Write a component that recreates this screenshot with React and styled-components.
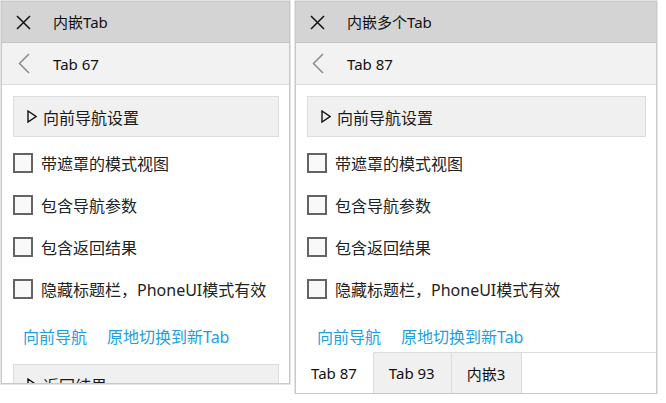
import React from 'react';
import styled, { createGlobalStyle } from 'styled-components';

const GlobalStyle = createGlobalStyle`
  html, body {
    margin: 0;
    padding: 0;
    background: #ffffff;
  }
  body {
    font-family: "Noto Sans", "Noto Sans CJK SC", sans-serif;
    color: #1a1a1a;
  }
`;

const Page = styled.div`
  display: flex;
  align-items: flex-start;
  gap: 5px;
  padding: 1px 0 0 1px;
`;

const Window = styled.div`
  box-sizing: border-box;
  width: ${({ width }) => width}px;
  height: ${({ height }) => height}px;
  border: 1px solid #c9c9c9;
  box-shadow: 0 0 0 1px #e4e4e4;
  display: flex;
  flex-direction: column;
  overflow: hidden;
  background: #fff;
`;

const TitleBar = styled.div`
  flex: none;
  height: 40px;
  display: flex;
  align-items: center;
  background: #d4d4d4;
  border-bottom: 1px solid #c4c4c4;
`;

const SubBar = styled.div`
  flex: none;
  height: 41px;
  display: flex;
  align-items: center;
  background: #f2f2f2;
  border-bottom: 1px solid #dedede;
`;

const IconSlot = styled.div`
  width: 51px;
  display: flex;
  align-items: center;
  padding-left: ${({ pad }) => pad}px;
  box-sizing: border-box;
`;

const Title = styled.span`
  font-size: 15px;
  line-height: 20px;
  color: #111;
`;

const Content = styled.div`
  flex: 1;
  overflow: hidden;
  padding: 11px 10px 0 11px;
`;

const Expander = styled.div`
  box-sizing: border-box;
  height: 41px;
  display: flex;
  align-items: center;
  gap: 6px;
  padding-left: 13px;
  background: #f0f0f0;
  border: 1px solid #dcdcdc;
  font-size: 16px;
  color: #1a1a1a;
`;

const CheckList = styled.div`
  margin-top: 5px;
  display: flex;
  flex-direction: column;
`;

const CheckRow = styled.label`
  height: 42px;
  display: flex;
  align-items: center;
  gap: 8px;
  font-size: 16px;
  color: #222;
`;

const Box = styled.span`
  box-sizing: border-box;
  width: 20px;
  height: 20px;
  border: 2px solid #646464;
  background: #f9f9f9;
  flex: none;
`;

const LinkRow = styled.div`
  height: 54px;
  display: flex;
  align-items: center;
  gap: 20px;
  padding: 0 0 2px 10px;
  box-sizing: border-box;
`;

const Link = styled.span`
  font-size: 16px;
  color: #1ba1e2;
  cursor: pointer;
`;

const TabBar = styled.div`
  flex: none;
  height: 41px;
  display: flex;
`;

const Tab = styled.div`
  box-sizing: border-box;
  display: flex;
  align-items: center;
  padding: 0 16px 0 15px;
  font-size: 15px;
  color: #111;
  background: ${({ active }) => (active ? '#ffffff' : '#f0f0f0')};
  border-top: 1px solid ${({ active }) => (active ? 'transparent' : '#dcdcdc')};
  border-right: 1px solid #dcdcdc;
`;

const TabFill = styled.div`
  flex: 1;
  border-top: 1px solid #dcdcdc;
`;

const CloseIcon = () => (
  <svg width="15" height="15" viewBox="0 0 15 15">
    <path d="M1 1 L14 14 M14 1 L1 14" stroke="#111" strokeWidth="1.5" fill="none" />
  </svg>
);

const BackIcon = () => (
  <svg width="12" height="21" viewBox="0 0 12 21">
    <path d="M11 1 L1.5 10.5 L11 20" stroke="#8c8c8c" strokeWidth="1.5" fill="none" />
  </svg>
);

const Triangle = () => (
  <svg width="10" height="13" viewBox="0 0 10 13">
    <path d="M1 1 L9 6.5 L1 12 Z" stroke="#111" strokeWidth="1.4" fill="none" strokeLinejoin="miter" />
  </svg>
);

const options = ['带遮罩的模式视图', '包含导航参数', '包含返回结果', '隐藏标题栏，PhoneUI模式有效'];

const Panel = ({ children }) => (
  <Content>
    <Expander>
      <Triangle />
      向前导航设置
    </Expander>
    <CheckList>
      {options.map((o) => (
        <CheckRow key={o}>
          <Box />
          {o}
        </CheckRow>
      ))}
    </CheckList>
    <LinkRow>
      <Link>向前导航</Link>
      <Link>原地切换到新Tab</Link>
    </LinkRow>
    {children}
  </Content>
);

const Header = ({ title, sub }) => (
  <>
    <TitleBar>
      <IconSlot pad={14}>
        <CloseIcon />
      </IconSlot>
      <Title>{title}</Title>
    </TitleBar>
    <SubBar>
      <IconSlot pad={16}>
        <BackIcon />
      </IconSlot>
      <Title>{sub}</Title>
    </SubBar>
  </>
);

export default function App() {
  return (
    <>
      <GlobalStyle />
      <Page>
        <Window width={289} height={383}>
          <Header title="内嵌Tab" sub="Tab 67" />
          <Panel>
            <Expander>
              <Triangle />
              返回结果
            </Expander>
          </Panel>
        </Window>
        <Window width={362} height={393}>
          <Header title="内嵌多个Tab" sub="Tab 87" />
          <Panel />
          <TabBar>
            <Tab active>Tab 87</Tab>
            <Tab>Tab 93</Tab>
            <Tab>内嵌3</Tab>
            <TabFill />
          </TabBar>
        </Window>
      </Page>
    </>
  );
}
